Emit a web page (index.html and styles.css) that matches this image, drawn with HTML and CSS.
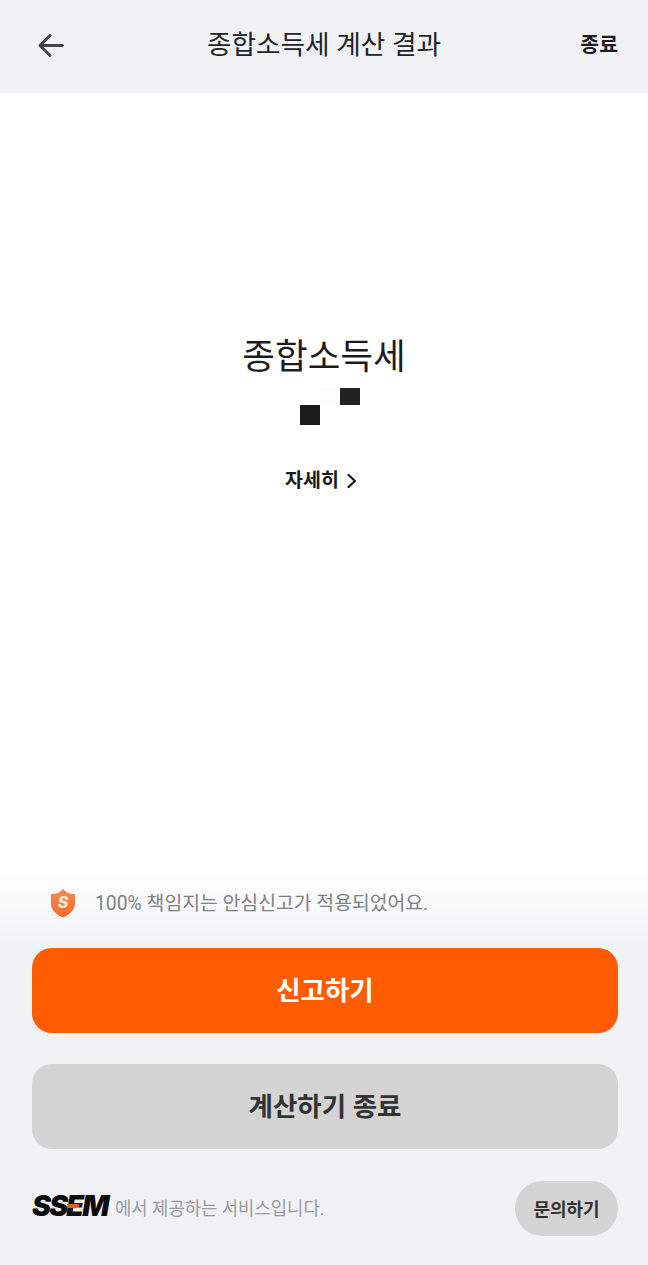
FILE: index.html
```html
<!DOCTYPE html>
<html lang="ko">
<head>
<meta charset="utf-8">
<title>종합소득세 계산 결과</title>
<link rel="stylesheet" href="styles.css">
</head>
<body>
<div class="page">
  <header class="topbar">
    <button class="back" aria-label="뒤로">
      <svg width="28" height="28" viewBox="0 0 28 28" fill="none"><path d="M25.5 14.500H3.500M13 4.500L3 14.500L13 24.500" stroke="#444548" stroke-width="2.9" stroke-linecap="round" stroke-linejoin="round"/></svg>
    </button>
    <h1 class="topbar-title">종합소득세 계산 결과</h1>
    <a class="topbar-end">종료</a>
  </header>
  <main class="result">
    <h2 class="result-title">종합소득세</h2>
    <div class="pixels">
      <span class="px px-a"></span>
      <span class="px px-faint"></span>
      <span class="px px-b"></span>
    </div>
    <a class="detail">자세히
      <svg width="12" height="16" viewBox="0 0 12 16" fill="none"><path d="M2.500 2L9 8L2.500 14" stroke="#1b1b1d" stroke-width="2.300" stroke-linecap="round" stroke-linejoin="round"/></svg>
    </a>
  </main>
  <section class="actions">
    <div class="notice">
      <svg class="shield" width="28" height="30" viewBox="0 0 28 30">
        <defs><linearGradient id="sg" x1="0" y1="0" x2="0" y2="1"><stop offset="0" stop-color="#f58a52"/><stop offset="1" stop-color="#f46a2a"/></linearGradient></defs>
        <path d="M14 1L18 4.500C20.500 5.500 23 6 26 6V16C26 22 20 27 14 29.500C8 27 2 22 2 16V6C5 6 7.500 5.500 10 4.500Z" fill="url(#sg)"/>
        <text x="14" y="20" text-anchor="middle" class="shield-s">S</text>
      </svg>
      <span class="notice-text">100% 책임지는 안심신고가 적용되었어요.</span>
    </div>
    <button class="btn btn-primary">신고하기</button>
    <button class="btn btn-secondary">계산하기 종료</button>
    <footer class="foot">
      <span class="logo"><span class="logo-text">SSEM</span><span class="logo-bar"></span></span>
      <span class="foot-text">에서 제공하는 서비스입니다.</span>
      <button class="ask">문의하기</button>
    </footer>
  </section>
</div>
</body>
</html>
```
FILE: styles.css
```css
* { box-sizing: border-box; }
html, body { margin: 0; padding: 0; }
body {
  background: #f1f2f4;
  font-family: Roboto, "Noto Sans CJK KR", sans-serif;
  color: #1b1b1d;
}
button { font-family: inherit; border: 0; padding: 0; cursor: pointer; }
.page { width: 648px; height: 1265px; display: flex; flex-direction: column; overflow: hidden; }

.topbar {
  height: 93px;
  flex: none;
  display: flex;
  align-items: center;
  justify-content: space-between;
  padding: 0 30px 3px 37px;
  position: relative;
  background: #f1f2f4;
}
.back { background: none; display: flex; width: 28px; height: 28px; }
.topbar-title {
  position: absolute;
  left: 0; right: 0; top: 28px;
  margin: 0;
  text-align: center;
  font-size: 26.700px;
  line-height: 34px;
  font-weight: 400;
  color: #222326;
}
.topbar-end { font-size: 20.500px; font-weight: 700; color: #1b1b1d; line-height: 28px; }

.result {
  flex: 1;
  background: #fff;
  display: flex;
  flex-direction: column;
  align-items: center;
  padding-top: 238px;
}
.result-title {
  margin: 0;
  font-size: 35.500px;
  line-height: 52px;
  font-weight: 400;
  color: #1c1c1e;
}
.pixels { width: 60px; height: 37px; position: relative; margin-top: 5px; margin-left: 12px; flex: none; }
.px { position: absolute; width: 20px; }
.px-a { left: 0; top: 17px; height: 20px; background: #1b1b1b; }
.px-faint { left: 20px; top: 0; height: 17px; background: #fcfcfc; }
.px-b { left: 40px; top: 0; height: 17px; background: #222; }
.detail {
  margin-top: 43px;
  display: flex;
  align-items: center;
  gap: 7px;
  font-size: 19.500px;
  line-height: 26px;
  font-weight: 700;
  color: #1b1b1d;
  margin-left: -5px;
}

.actions {
  flex: none;
  height: 397px;
  padding: 0 30px 0 32px;
  background: linear-gradient(#fff 0, #f1f2f4 78px);
  display: flex;
  flex-direction: column;
}
.notice {
  display: flex;
  align-items: center;
  height: 34px;
  margin-top: 18px;
  padding-left: 17px;
  gap: 18px;
  font-size: 19.350px;
  color: #7e8084;
}
.notice-text { padding-bottom: 3px; }
.shield-s { font: italic 800 16px Inter, sans-serif; fill: #fde6d8; }
.btn {
  height: 85px;
  border-radius: 20px;
  font-size: 26.500px;
  font-weight: 700;
  width: 586px;
  flex: none;
  padding-bottom: 4px;
}
.btn-primary { background: #ff5c00; color: #fff; margin-top: 28px; }
.btn-secondary { background: #d4d4d4; color: #333; margin-top: 31px; }
.foot { display: flex; align-items: center; margin-top: 32px; height: 55px; }
.logo { position: relative; display: inline-block; line-height: 30px; width: 78px; flex: none; }
.logo-text {
  font: italic 900 28.500px/30px Inter, sans-serif;
  color: #0b0b0b;
  letter-spacing: -1.800px;
}
.logo-bar { position: absolute; left: 35px; top: 13px; width: 12px; height: 4px; background: #f0591c; }
.foot-text { font-size: 17.750px; color: #9a9b9e; margin-left: 5px; padding-bottom: 3px; }
.ask {
  margin-left: auto;
  width: 103px;
  height: 55px;
  border-radius: 28px;
  background: #d4d4d4;
  color: #333;
  font-size: 18px;
  font-weight: 700;
  padding-bottom: 2px;
}
```
